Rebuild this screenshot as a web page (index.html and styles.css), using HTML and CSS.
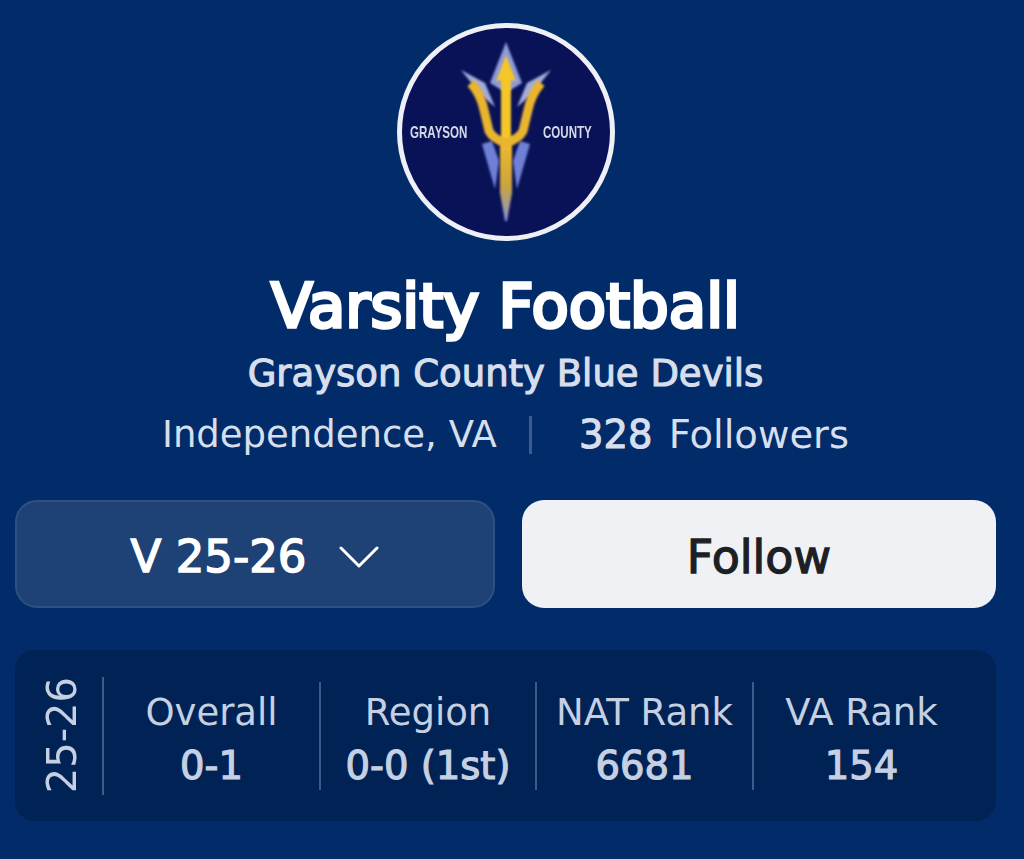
FILE: index.html
```html
<!DOCTYPE html>
<html lang="en">
  <head>
    <meta charset="UTF-8" />
    <meta name="viewport" content="width=device-width, initial-scale=1.0" />
    <title>Varsity Football</title>
    <link rel="stylesheet" href="styles.css">
  </head>
  <body>
    <div class="page">
      <div class="logo">
        <svg class="trident" viewBox="0 0 218 218" width="218" height="218">
          <defs>
            <filter id="soft"><feGaussianBlur stdDeviation="0.8" /></filter>
            <filter id="softer"><feGaussianBlur stdDeviation="1.3" /></filter>
            <linearGradient id="shaft" x1="0" y1="0" x2="0" y2="1">
              <stop offset="0" stop-color="#eeb92c" />
              <stop offset="0.55" stop-color="#c9a43f" />
              <stop offset="1" stop-color="#8492dc" />
            </linearGradient>
          </defs>
          <g filter="url(#softer)">
            <path d="M109 19 L125 60 L112 68 L106 68 L93 60 Z" fill="#8f9ad8" />
            <path d="M64 47 L88 60 L98 84 L84 72 Z" fill="#a3abd8" />
            <path d="M154 47 L130 60 L120 84 L134 72 Z" fill="#a3abd8" />
            <path d="M85 121 L95 118 L102 138 L98 166 Z" fill="#6f80d6" />
            <path d="M133 121 L123 118 L116 138 L120 166 Z" fill="#6f80d6" />
          </g>
          <g filter="url(#soft)">
            <path d="M103 122 L115 122 L115 170 L110 198 L108 198 L103 170 Z" fill="url(#shaft)" />
            <path d="M109 32 L119 58 L114 57 L114 122 L104 122 L104 57 L99 58 Z" fill="#f5c62c" />
            <path d="M74 60 Q84 72 87 87 L92 108 Q96 116 109 120 Q122 116 126 108 L131 87 Q134 72 144 60" fill="none" stroke="#e9b52e" stroke-width="9" />
          </g>
        </svg>
        <span class="logo-word logo-word-left">GRAYSON</span>
        <span class="logo-word logo-word-right">COUNTY</span>
      </div>

      <h1 class="title">Varsity Football</h1>
      <div class="team">Grayson County Blue Devils</div>
      <div class="meta">
        <span class="meta-place">Independence, VA</span>
        <span class="meta-line"></span>
        <span><b>328</b> Followers</span>
      </div>

      <div class="actions">
        <div class="season">
          <span>V 25-26</span>
          <svg viewBox="0 0 40 24" width="40" height="24">
            <path d="M2 3 L20 21 L38 3" fill="none" stroke="#fff" stroke-width="3" stroke-linecap="round" stroke-linejoin="round" />
          </svg>
        </div>
        <div class="follow">Follow</div>
      </div>

      <div class="stats">
        <div class="stats-year"><span>25-26</span></div>
        <div class="stat stat-overall">
          <div class="stat-label">Overall</div>
          <div class="stat-value">0-1</div>
        </div>
        <div class="stat stat-region">
          <div class="stat-label">Region</div>
          <div class="stat-value">0-0 (1st)</div>
        </div>
        <div class="stat stat-nat">
          <div class="stat-label">NAT Rank</div>
          <div class="stat-value">6681</div>
        </div>
        <div class="stat stat-state">
          <div class="stat-label">VA Rank</div>
          <div class="stat-value">154</div>
        </div>
      </div>
    </div>
  </body>
</html>
```

FILE: styles.css
```css
* {
  box-sizing: border-box;
}
html,
body {
  margin: 0;
  height: 100%;
}
body {
  background-color: #022c69;
  font-family: "DejaVu Sans", "Noto Sans", sans-serif;
  color: #fff;
}
.page {
  width: 1024px;
  height: 859px;
  padding: 23px 28px 0 15px;
  display: flex;
  flex-direction: column;
  align-items: center;
  overflow: hidden;
}

/* logo */
.logo {
  position: relative;
  width: 218px;
  height: 218px;
  flex: none;
  border-radius: 50%;
  background-color: #0a1257;
  border: 5px solid #eef0f6;
}
.trident {
  position: absolute;
  top: -5px;
  left: -5px;
}
.logo-word {
  position: absolute;
  top: 94px;
  font-family: "Liberation Sans", sans-serif;
  font-size: 17px;
  font-weight: 700;
  line-height: 22px;
  color: #d5d8e6;
  filter: blur(0.7px);
  transform: scaleX(0.68);
}
.logo-word-left {
  left: 8px;
  transform-origin: left center;
}
.logo-word-right {
  right: 18px;
  transform-origin: right center;
}

/* heading */
.title {
  margin: 29px 0 0;
  font-size: 61px;
  font-weight: 400;
  -webkit-text-stroke: 3.4px #fff;
  line-height: 72px;
  white-space: nowrap;
}
.team {
  margin-top: 9px;
  font-size: 37px;
  -webkit-text-stroke: 1.1px #d7deec;
  line-height: 46px;
  color: #d7deec;
}
.meta {
  margin-top: 14px;
  display: flex;
  align-items: center;
  font-size: 38.5px;
  line-height: 48px;
  color: #d7deec;
}
.meta-place {
  font-size: 37px;
}
.meta b {
  font-weight: 400;
  -webkit-text-stroke: 1.1px #d7deec;
  margin-right: 4px;
}
.meta-line {
  width: 3px;
  height: 38px;
  margin: 0 47px 0 32px;
  background-color: #3c5e8f;
}

/* buttons */
.actions {
  width: 100%;
  margin-top: 41px;
  display: flex;
  gap: 27px;
}
.season,
.follow {
  height: 108px;
  padding-top: 5px;
  border-radius: 22px;
  display: flex;
  align-items: center;
  justify-content: center;
  font-size: 45px;
}
.season {
  flex: 0 0 480px;
  gap: 33px;
  background-color: #1e4176;
  border: 2px solid #31507f;
  -webkit-text-stroke: 1.5px #fff;
}
.follow {
  flex: 1;
  background-color: #f0f1f5;
  color: #1d1f24;
  font-size: 46px;
  -webkit-text-stroke: 1.3px #1d1f24;
}

/* record box */
.stats {
  width: 100%;
  height: 171px;
  margin-top: 42px;
  padding: 26px 0;
  display: flex;
  align-items: center;
  border-radius: 20px;
  background-color: #012254;
}
.stats-year {
  flex: 0 0 89px;
  height: 118px;
  padding-left: 6px;
  border-right: 2px solid #3a5b8c;
  display: flex;
  align-items: center;
  justify-content: center;
}
.stats-year span {
  writing-mode: vertical-rl;
  transform: rotate(180deg);
  font-size: 40px;
  line-height: 44px;
  color: #c5d0e2;
}
.stat {
  height: 108px;
  padding-top: 9px;
  display: flex;
  flex-direction: column;
  align-items: center;
  justify-content: center;
  border-right: 2px solid #3a5b8c;
  white-space: nowrap;
}
.stat-overall {
  flex: 0 0 217px;
}
.stat-region {
  flex: 0 0 216px;
}
.stat-nat {
  flex: 0 0 217px;
}
.stat-state {
  flex: 1;
  border-right: 0;
  padding-right: 27px;
}
.stat-label {
  font-size: 37px;
  line-height: 52px;
  color: #c5d0e2;
}
.stat-value {
  font-size: 38.5px;
  -webkit-text-stroke: 1.2px #c5d0e2;
  line-height: 54px;
  color: #c5d0e2;
}
```
